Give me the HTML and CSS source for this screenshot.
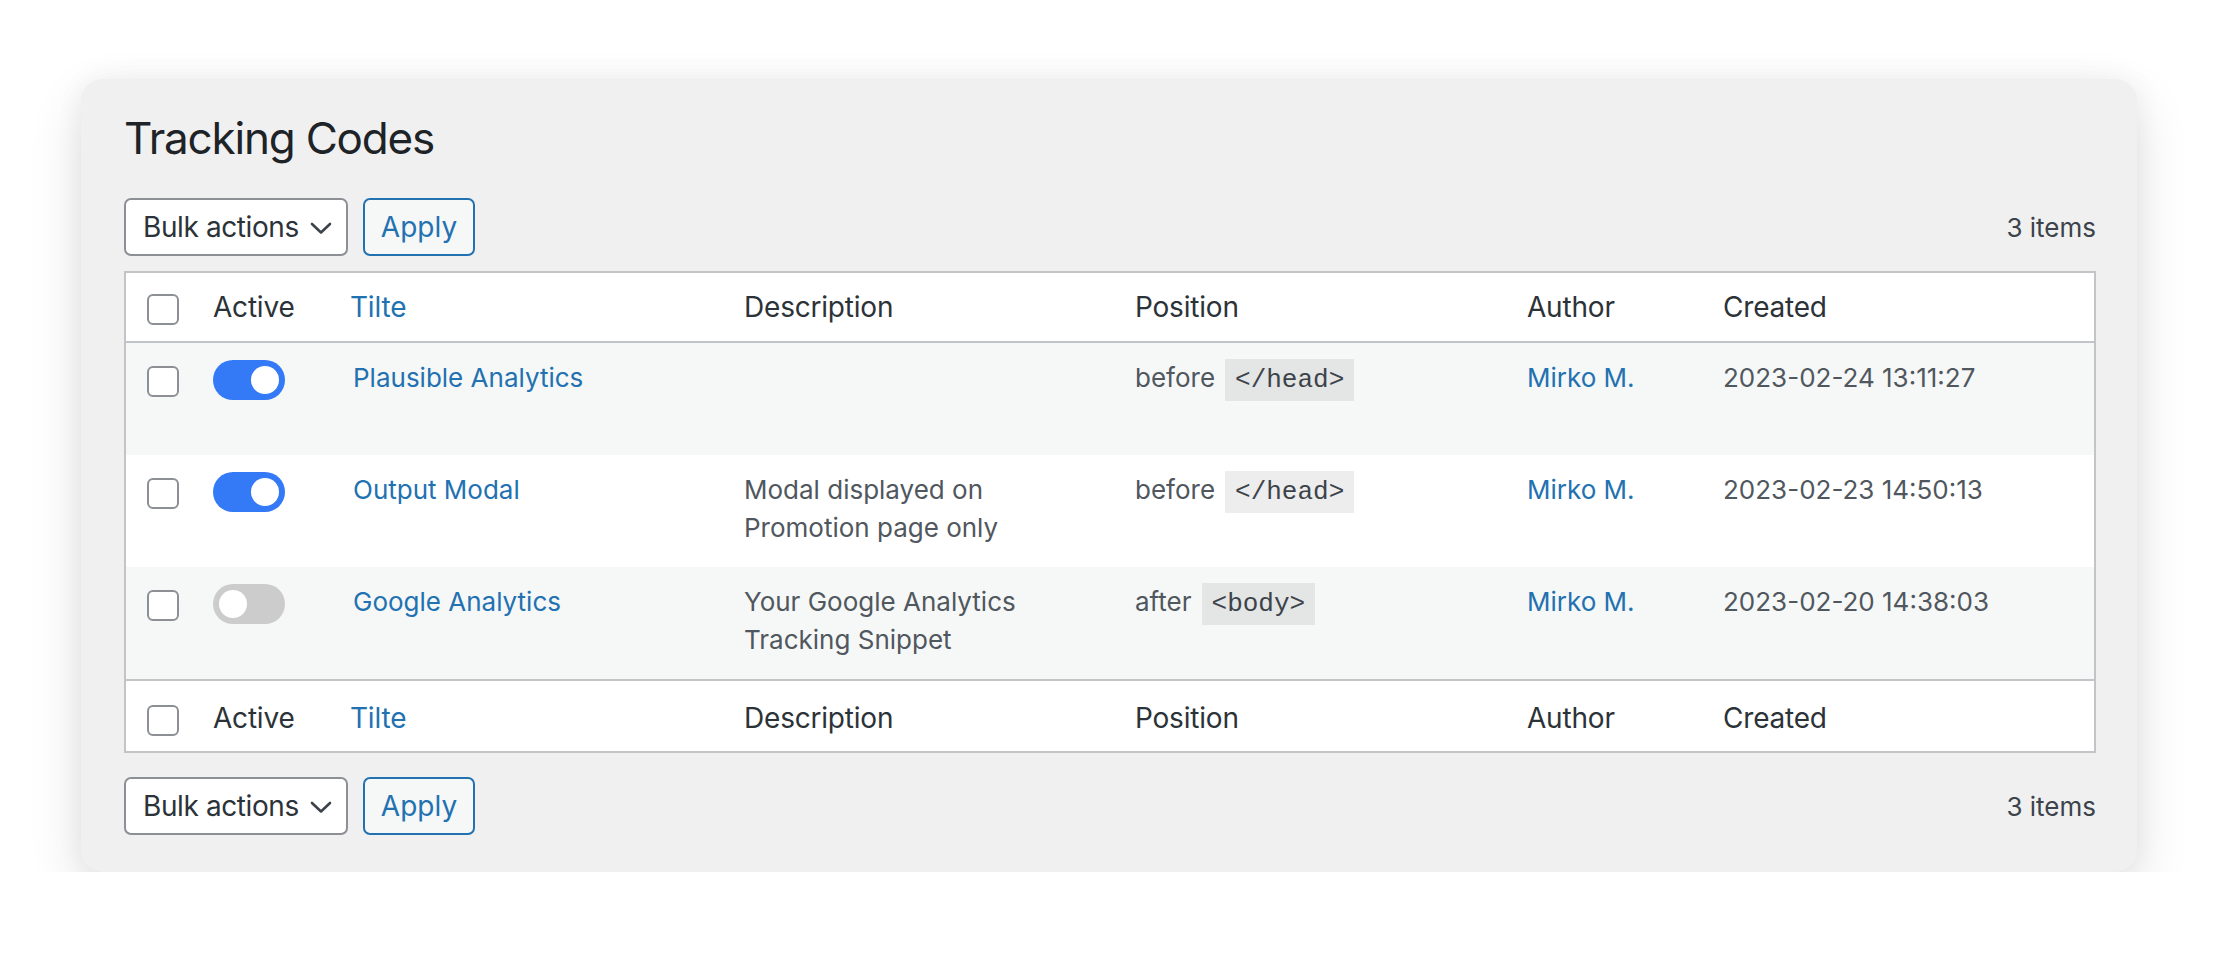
FILE: index.html
```html
<!DOCTYPE html>
<html lang="en">
<head>
<meta charset="utf-8">
<title>Tracking Codes</title>
<link rel="stylesheet" href="styles.css">
</head>
<body>
<div class="page">
  <div class="card">
    <h1 class="title">Tracking Codes</h1>

    <div class="tablenav tablenav-top">
      <div class="actions">
        <div class="select">
          <span>Bulk actions</span>
          <svg class="chevron" width="22" height="13" viewBox="0 0 22 13"><path d="M2 2 L11 10.5 L20 2" fill="none" stroke="#3c434a" stroke-width="2.6" stroke-linecap="round" stroke-linejoin="round"/></svg>
        </div>
        <button class="btn">Apply</button>
      </div>
      <div class="count">3 items</div>
    </div>

    <table class="list">
      <colgroup>
        <col class="c-cb">
        <col class="c-active">
        <col class="c-title">
        <col class="c-desc">
        <col class="c-pos">
        <col class="c-author">
        <col class="c-created">
      </colgroup>
      <thead>
        <tr>
          <th class="cb"><span class="check"></span></th>
          <th>Active</th>
          <th class="sortable"><a href="#">Tilte</a></th>
          <th>Description</th>
          <th>Position</th>
          <th>Author</th>
          <th>Created</th>
        </tr>
      </thead>
      <tbody>
        <tr class="alt">
          <td class="cb"><span class="check"></span></td>
          <td><span class="toggle on"><span class="knob"></span></span></td>
          <td><a href="#" class="row-title">Plausible Analytics</a></td>
          <td></td>
          <td>before<code>&lt;/head&gt;</code></td>
          <td><a href="#">Mirko M.</a></td>
          <td>2023-02-24 13:11:27</td>
        </tr>
        <tr>
          <td class="cb"><span class="check"></span></td>
          <td><span class="toggle on"><span class="knob"></span></span></td>
          <td><a href="#" class="row-title">Output Modal</a></td>
          <td>Modal displayed on<br>Promotion page only</td>
          <td>before<code>&lt;/head&gt;</code></td>
          <td><a href="#">Mirko M.</a></td>
          <td>2023-02-23 14:50:13</td>
        </tr>
        <tr class="alt">
          <td class="cb"><span class="check"></span></td>
          <td><span class="toggle"><span class="knob"></span></span></td>
          <td><a href="#" class="row-title">Google Analytics</a></td>
          <td>Your Google Analytics<br>Tracking Snippet</td>
          <td>after<code>&lt;body&gt;</code></td>
          <td><a href="#">Mirko M.</a></td>
          <td>2023-02-20 14:38:03</td>
        </tr>
      </tbody>
      <tfoot>
        <tr>
          <th class="cb"><span class="check"></span></th>
          <th>Active</th>
          <th class="sortable"><a href="#">Tilte</a></th>
          <th>Description</th>
          <th>Position</th>
          <th>Author</th>
          <th>Created</th>
        </tr>
      </tfoot>
    </table>

    <div class="tablenav tablenav-bottom">
      <div class="actions">
        <div class="select">
          <span>Bulk actions</span>
          <svg class="chevron" width="22" height="13" viewBox="0 0 22 13"><path d="M2 2 L11 10.5 L20 2" fill="none" stroke="#3c434a" stroke-width="2.6" stroke-linecap="round" stroke-linejoin="round"/></svg>
        </div>
        <button class="btn">Apply</button>
      </div>
      <div class="count">3 items</div>
    </div>
  </div>
</div>
</body>
</html>
```

FILE: styles.css
```css
* { box-sizing: border-box; }

html, body {
  margin: 0;
  padding: 0;
  background: #ffffff;
}

body {
  font-family: Inter, "Liberation Sans", sans-serif;
  color: #2c3338;
}

.page {
  padding: 79px 80px 0 81px;
}

.card {
  background: #f0f0f1;
  border-radius: 22px;
  box-shadow: 0 20px 54px rgba(0, 0, 0, 0.12), 0 0 28px rgba(0, 0, 0, 0.05);
  padding: 29px 41px 37px 43px;
}

.title {
  margin: 0;
  font-size: 44px;
  line-height: 60px;
  font-weight: 400;
  letter-spacing: -1.2px;
  color: #1d2327;
}

.tablenav {
  display: flex;
  align-items: center;
  justify-content: space-between;
  height: 58px;
}

.tablenav-top {
  margin-top: 30px;
  margin-bottom: 15px;
}

.tablenav-bottom {
  margin-top: 24px;
}

.actions {
  display: flex;
  align-items: center;
  gap: 15px;
}

.select {
  width: 224px;
  height: 58px;
  display: flex;
  align-items: center;
  justify-content: space-between;
  padding: 0 14px 0 17px;
  background: #ffffff;
  border: 2px solid #8c8f94;
  border-radius: 7px;
  font-size: 28px;
  letter-spacing: -0.4px;
  color: #2c3338;
}

.chevron {
  display: block;
  margin-top: 2px;
}

.btn {
  height: 58px;
  width: 112px;
  padding: 0;
  font-family: inherit;
  font-size: 28px;
  color: #2271b1;
  background: #f6f7f7;
  border: 2px solid #2271b1;
  border-radius: 7px;
}

.count {
  font-size: 26px;
  color: #3c434a;
}

.list {
  width: 100%;
  table-layout: fixed;
  border-collapse: separate;
  border-spacing: 0;
  background: #ffffff;
  border: 2px solid #c3c4c7;
}

.c-cb { width: 67px; }
.c-active { width: 140px; }
.c-title { width: 391px; }
.c-desc { width: 391px; }
.c-pos { width: 392px; }
.c-author { width: 196px; }
.c-created { width: 391px; }

.list th {
  text-align: left;
  font-weight: 400;
  font-size: 28px;
  letter-spacing: -0.2px;
  color: #2c3338;
  padding: 0 20px;
  vertical-align: middle;
}

.list thead tr { height: 70px; }
.list thead th { border-bottom: 2px solid #c3c4c7; }

.list tfoot tr { height: 72px; }
.list tfoot th { border-top: 2px solid #c3c4c7; padding-top: 4px; }

.list th.sortable { padding-left: 17px; }

.list a {
  color: #2271b1;
  text-decoration: none;
}

.list th.cb,
.list td.cb {
  padding: 0 0 0 21px;
  vertical-align: top;
}

.list thead th.cb { padding-top: 21px; }
.list tfoot th.cb { padding-top: 24px; }
.list td.cb { padding-top: 23px; }

.check {
  display: block;
  width: 32px;
  height: 31px;
  background: #ffffff;
  border: 2px solid #8c8f94;
  border-radius: 6px;
}

.list tbody tr { height: 112px; }
.list tbody tr.alt { background: #f6f7f7; }

.list td {
  vertical-align: top;
  padding: 16px 20px;
  font-size: 26px;
  line-height: 38px;
  color: #50575e;
}

.toggle {
  display: block;
  position: relative;
  width: 72px;
  height: 40px;
  margin-top: 1px;
  border-radius: 20px;
  background: #cccccc;
}

.toggle.on { background: #3479f6; }

.knob {
  position: absolute;
  top: 6px;
  left: 6px;
  width: 28px;
  height: 28px;
  border-radius: 50%;
  background: #ffffff;
}

.toggle.on .knob {
  left: auto;
  right: 6px;
}

code {
  display: inline-block;
  margin-left: 10px;
  padding: 5px 10px 5px;
  line-height: 32px;
  font-family: "Liberation Mono", "DejaVu Sans Mono", monospace;
  font-size: 26px;
  color: #3c434a;
  background: rgba(0, 0, 0, 0.07);
}
```
